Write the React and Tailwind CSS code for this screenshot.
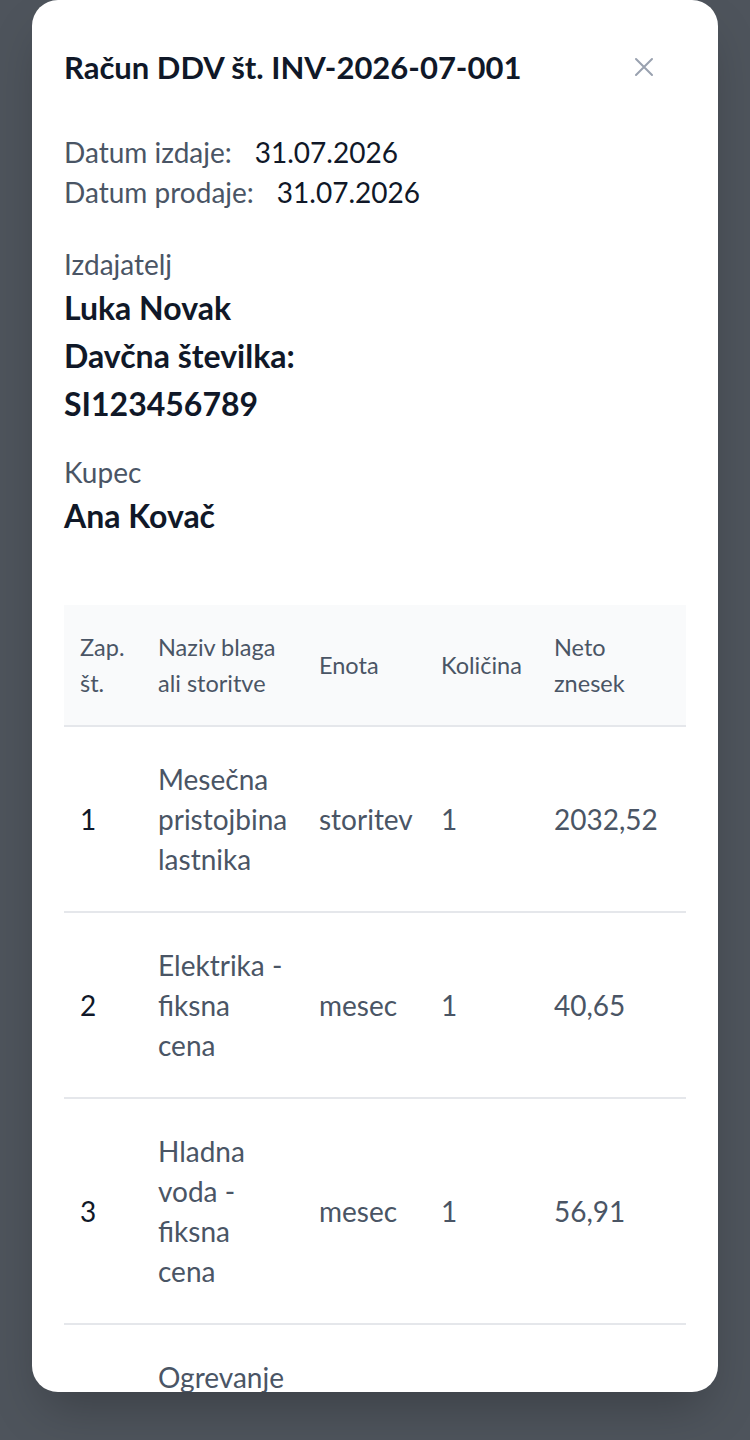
import React from "react";

const items = [
  { no: "1", name: ["Mesečna", "pristojbina", "lastnika"], unit: "storitev", qty: "1", net: "2032,52" },
  { no: "2", name: ["Elektrika -", "fiksna", "cena"], unit: "mesec", qty: "1", net: "40,65" },
  { no: "3", name: ["Hladna", "voda -", "fiksna", "cena"], unit: "mesec", qty: "1", net: "56,91" },
  { no: "4", name: ["Ogrevanje", "- fiksna", "cena"], unit: "mesec", qty: "1", net: "120,00" },
];

const CloseIcon = () => (
  <svg width="20" height="20" viewBox="0 0 20 20" fill="none" stroke="currentColor" strokeWidth="2" strokeLinecap="round">
    <path d="M2 2 L18 18 M18 2 L2 18" />
  </svg>
);

const App = () => {
  return (
    <div className="min-h-screen bg-[#4e545c] flex justify-center" style={{ fontFamily: "Lato, 'Open Sans', sans-serif" }}>
      <div className="w-[686px] h-[1392px] bg-white rounded-[26px] overflow-hidden shadow-2xl px-8 pt-[47px]">
        <div className="flex items-center justify-between">
          <h2 className="text-[31px] leading-[40px] font-bold text-gray-900">Račun DDV št. INV-2026-07-001</h2>
          <button className="mr-8 text-gray-400">
            <CloseIcon />
          </button>
        </div>

        <div className="mt-[45px] text-[28px] leading-[40px]">
          <div>
            <span className="text-gray-600">Datum izdaje:</span>
            <span className="ml-[23px] text-gray-900">31.07.2026</span>
          </div>
          <div>
            <span className="text-gray-600">Datum prodaje:</span>
            <span className="ml-[23px] text-gray-900">31.07.2026</span>
          </div>
        </div>

        <div className="mt-8">
          <div className="text-[28px] leading-[40px] text-gray-600">Izdajatelj</div>
          <div className="text-[32px] leading-[48px] font-bold text-gray-900">
            <div>Luka Novak</div>
            <div>Davčna številka:</div>
            <div>SI123456789</div>
          </div>
        </div>

        <div className="mt-6">
          <div className="text-[28px] leading-[40px] text-gray-600">Kupec</div>
          <div className="text-[32px] leading-[48px] font-bold text-gray-900">Ana Kovač</div>
        </div>

        <table className="mt-[65px] w-full table-fixed border-collapse text-left">
          <colgroup>
            <col className="w-[78px]" />
            <col className="w-[161px]" />
            <col className="w-[122px]" />
            <col className="w-[113px]" />
            <col className="w-[148px]" />
          </colgroup>
          <thead className="bg-gray-50">
            <tr className="border-b-2 border-gray-200 text-[23.5px] leading-[36px] text-gray-600">
              <th className="px-4 py-6 font-normal whitespace-nowrap">Zap.<br />št.</th>
              <th className="px-4 py-6 font-normal whitespace-nowrap">Naziv blaga<br />ali storitve</th>
              <th className="px-4 py-6 font-normal whitespace-nowrap">Enota</th>
              <th className="px-4 py-6 font-normal whitespace-nowrap">Količina</th>
              <th className="px-4 py-6 font-normal whitespace-nowrap">Neto<br />znesek</th>
            </tr>
          </thead>
          <tbody className="text-[28px] leading-[40px] text-gray-600">
            {items.map((item) => (
              <tr key={item.no} className="border-b-2 border-gray-200">
                <td className="px-4 py-8 text-gray-900">{item.no}</td>
                <td className="px-4 py-8 whitespace-nowrap">
                  {item.name.map((line) => (
                    <div key={line}>{line}</div>
                  ))}
                </td>
                <td className="px-4 py-8">{item.unit}</td>
                <td className="px-4 py-8">{item.qty}</td>
                <td className="px-4 py-8">{item.net}</td>
              </tr>
            ))}
          </tbody>
        </table>
      </div>
    </div>
  );
};

export default App;
